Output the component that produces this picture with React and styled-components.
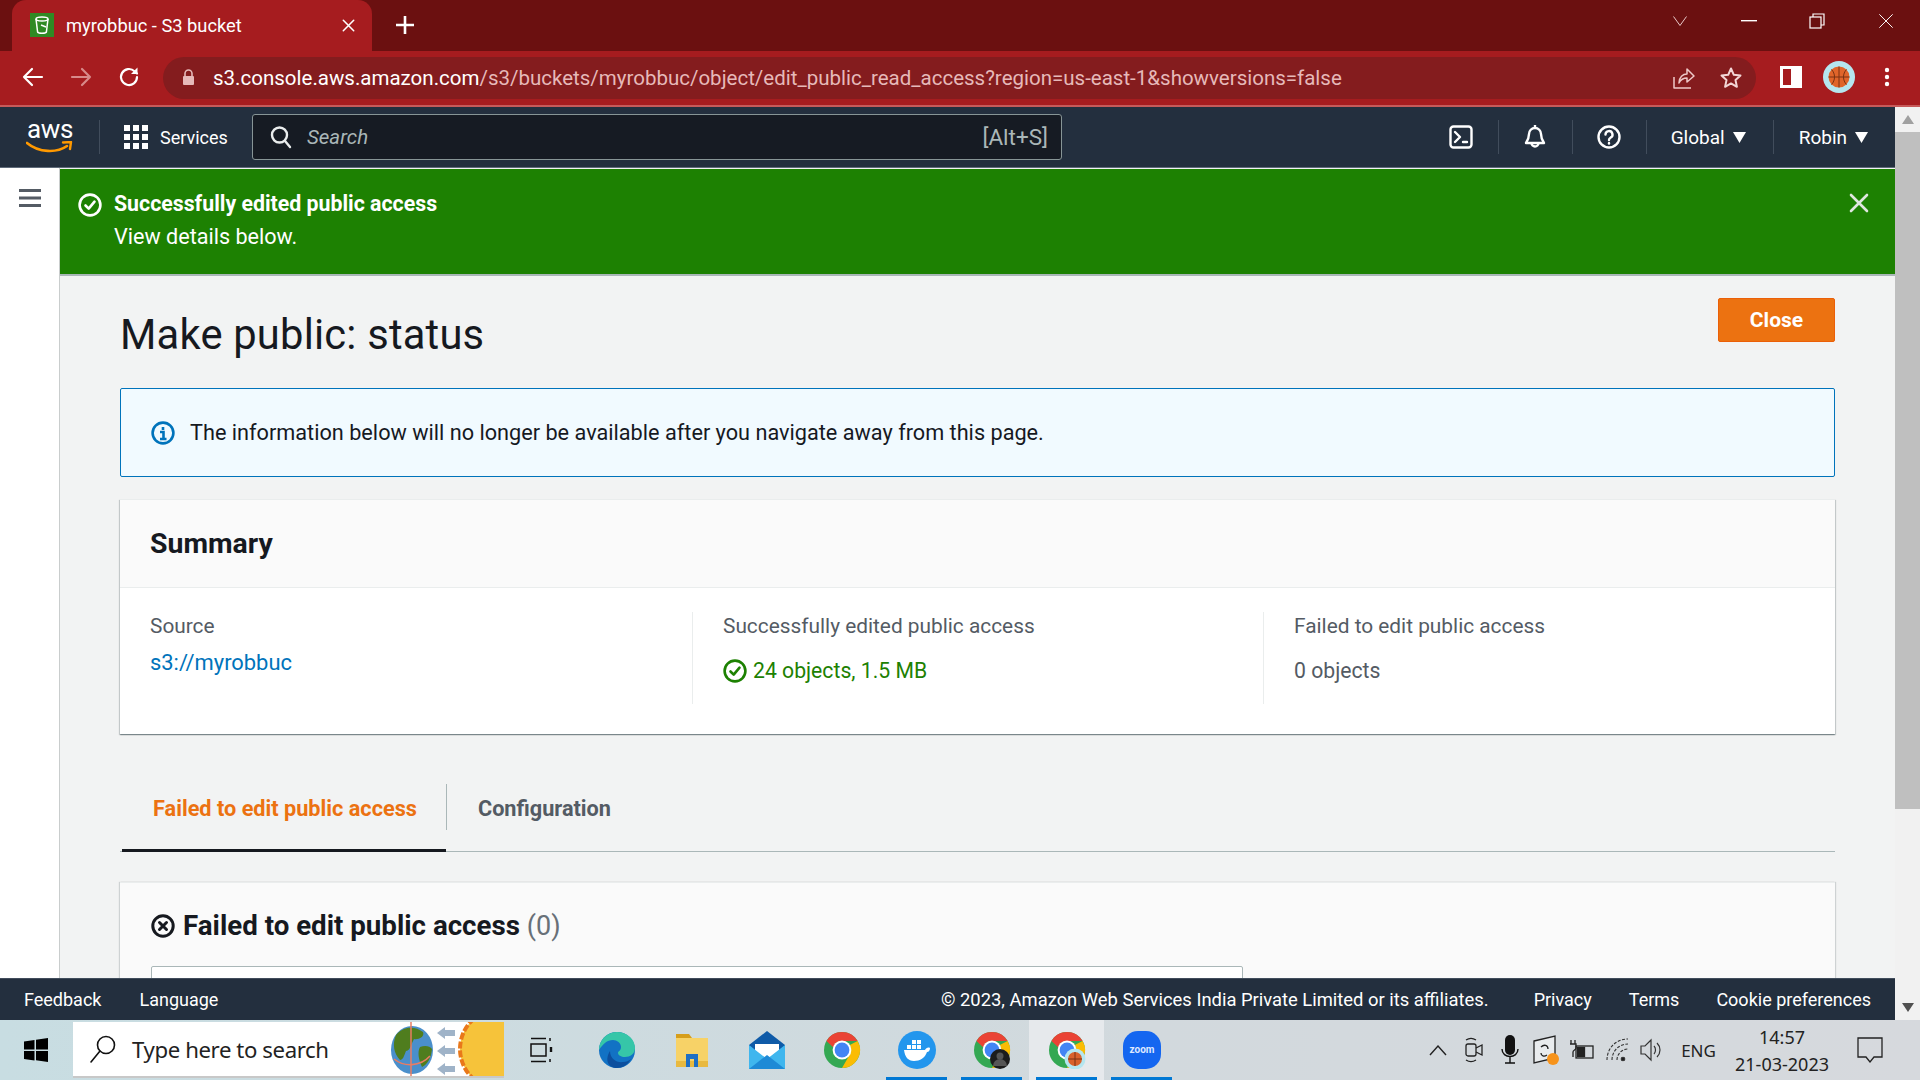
import React from "react";
import styled, { createGlobalStyle } from "styled-components";

const Global = createGlobalStyle`
  html, body { margin: 0; padding: 0; width: 1920px; height: 1080px; overflow: hidden; }
  body { font-family: "Roboto", "Noto Sans", sans-serif; color: #16191f; }
  * { box-sizing: border-box; }
`;

const Screen = styled.div`width:1920px;height:1080px;display:flex;flex-direction:column;overflow:hidden;background:#fff;`;

/* Chrome window */
const TabStrip = styled.div`height:51px;background:#6b1010;display:flex;align-items:flex-end;padding-left:12px;flex:none;`;
const ChromeTab = styled.div`width:360px;height:51px;background:#a61c1f;border-radius:14px 14px 0 0;display:flex;align-items:center;padding-left:18px;gap:12px;color:#fff;font:400 18.3px "Roboto",sans-serif;padding-bottom:1px;`;
const Favicon = styled.div`width:24px;height:24px;background:#2f8a24;display:grid;place-items:center;flex:none;`;
const TabTitle = styled.span`flex:1;white-space:nowrap;`;
const TabClose = styled.span`width:30px;display:flex;justify-content:flex-start;`;
const NewTab = styled.div`width:24px;height:24px;margin:0 0 14px 21px;display:grid;place-items:center;align-self:flex-end;`;
const WinControls = styled.div`margin-left:auto;display:flex;align-self:stretch;align-items:center;`;
const WinSlot = styled.div`width:68.5px;height:100%;display:grid;place-items:center;padding-bottom:9px;`;

const Toolbar = styled.div`height:56px;background:#a61c1f;border-bottom:2px solid #c65a5a;display:flex;align-items:center;flex:none;padding-bottom:2px;`;
const ToolBtn = styled.div`width:48px;height:40px;display:grid;place-items:center;flex:none;`;
const ToolNav = styled.div`display:flex;padding-left:9px;width:163px;flex:none;`;
const Omnibox = styled.div`width:1593px;height:42px;border-radius:21px;background:#841c1e;display:flex;align-items:center;padding:0 0 0 19px;flex:none;margin-top:1px;`;
const UrlText = styled.div`margin-left:18px;font:400 20.5px "Roboto",sans-serif;color:#e6b9b9;white-space:nowrap;flex:1;`;
const UrlHost = styled.span`color:#fff;`;
const OmniIcons = styled.div`display:flex;align-items:center;padding-right:1px;`;
const ToolRight = styled.div`display:flex;padding-left:11px;`;

/* Console */
const ConsoleRow = styled.div`flex:1;min-height:0;display:flex;`;
const ConsoleCol = styled.div`flex:1;min-width:0;display:flex;flex-direction:column;`;
const Scrollbar = styled.div`width:25px;flex:none;background:#f1f1f1;display:flex;flex-direction:column;align-items:center;`;
const ScrollBtn = styled.div`height:25px;width:100%;display:grid;place-items:center;flex:none;`;
const ScrollThumb = styled.div`width:100%;height:677px;background:#bfbfbf;flex:none;`;
const ScrollSpace = styled.div`flex:1;`;

const Nav = styled.div`height:61px;background:#232f3e;display:flex;align-items:center;flex:none;border-bottom:1px solid #5f6b7a;font-family:"Roboto",sans-serif;color:#fff;`;
const LogoCell = styled.div`width:100px;height:34px;border-right:1px solid #414d5c;padding-left:27px;flex:none;`;
const LogoWord = styled.span`display:block;font:400 26px/24px "Roboto",sans-serif;letter-spacing:-.3px;height:24px;margin-top:-3px;`;
const LogoSmile = styled.svg`display:block;margin-left:-1px;`;
const Services = styled.div`display:flex;align-items:center;gap:12px;width:152px;padding-left:24px;font-size:18px;flex:none;`;
const SearchBox = styled.div`width:810px;height:46px;border:1px solid #879596;border-radius:3px;background:#161b23;display:flex;align-items:center;padding:0 13px 0 17px;color:#aab7b8;font-size:22.5px;flex:none;`;
const SearchHint = styled.em`margin-left:15px;flex:1;font-style:italic;font-size:20.5px;`;
const NavRight = styled.div`margin-left:auto;display:flex;align-items:center;height:34px;padding-right:27px;`;
const NavIcon = styled.div`width:74px;height:34px;display:grid;place-items:center;border-right:1px solid #414d5c;flex:none;`;
const NavMenu = styled.div`display:flex;align-items:center;gap:8px;height:34px;font-size:19px;padding:0 ${p => p.$pr}px 0 ${p => p.$pl}px;border-right:${p => (p.$divider ? "1px solid #414d5c" : "none")};`;

const Body = styled.div`flex:1;min-height:0;display:flex;`;
const SideNav = styled.div`width:60px;flex:none;background:#fff;border-right:1px solid #c9cdcd;padding:21px 0 0 19px;`;
const Main = styled.div`flex:1;min-width:0;background:#f2f3f3;overflow:hidden;display:flex;flex-direction:column;`;

const Flash = styled.div`margin-top:1px;height:107px;background:#1d8102;color:#fff;display:flex;padding:22px 26px 0 18px;border-bottom:2px solid #aab7b8;flex:none;font-family:"Roboto",sans-serif;`;
const FlashIcon = styled.div`width:36px;height:24px;flex:none;margin-top:2px;`;
const FlashText = styled.div`flex:1;font-size:21.3px;`;
const FlashTitle = styled.div`font-weight:700;line-height:25px;`;
const FlashSub = styled.div`line-height:25px;margin-top:8px;font-size:21.6px;`;
const FlashClose = styled.div`margin-top:2px;height:20px;flex:none;`;

const Content = styled.div`padding:0 60px;flex:none;`;
const HeadRow = styled.div`display:flex;justify-content:space-between;align-items:flex-start;height:112px;padding-top:22px;`;
const Heading = styled.h1`margin:13px 0 0;font:400 41.7px/48px "Roboto",sans-serif;color:#16191f;letter-spacing:.2px;`;
const Primary = styled.button`width:117px;height:44px;background:#ec7211;border:1px solid #eb5f07;border-radius:2px;color:#fff;font:700 21px "Roboto",sans-serif;`;

const Info = styled.div`height:89px;background:#f1faff;border:1px solid #0073bb;border-radius:2px;display:flex;align-items:center;padding-left:30px;gap:15px;font-size:21.7px;margin-bottom:22px;`;

const Card = styled.section`background:#fff;box-shadow:0 1px 1px 0 rgba(0,28,36,.3),1px 1px 1px 0 rgba(0,28,36,.15),-1px 1px 1px 0 rgba(0,28,36,.15);border-top:1px solid #eaeded;`;
const CardHead = styled.div`height:88px;background:#fafafa;border-bottom:1px solid #eaeded;padding-left:30px;display:flex;align-items:center;`;
const CardTitle = styled.h2`margin:0;font:700 28.4px "Roboto",sans-serif;`;
const Cols = styled.div`display:grid;grid-template-columns:573px 571px 1fr;padding:24px 0 30px;height:146px;`;
const Col = styled.div`padding-left:30px;border-right:${p => (p.$last ? "none" : "1px solid #eaeded")};height:92px;`;
const Label = styled.div`font-size:20.85px;color:#545b64;line-height:28px;`;
const Link = styled.div`font-size:21.9px;color:#0073bb;line-height:28px;margin-top:9px;`;
const Value = styled.div`font-size:21.2px;line-height:28px;margin-top:${p => p.$mt}px;color:${p => p.$color};display:flex;align-items:center;gap:6px;`;

const Tabs = styled.div`margin-top:50px;height:68px;border-bottom:1px solid #aab7b8;display:flex;padding-left:2px;`;
const TabBtn = styled.div`height:68px;font:700 21.7px "Roboto",sans-serif;line-height:49px;color:${p => (p.$active ? "#ec7211" : "#545b64")};border-bottom:${p => (p.$active ? "3px solid #16191f" : "none")};padding:0 29px 0 31px;`;
const TabDivider = styled.div`width:1px;height:46px;background:#aab7b8;flex:none;`;

const Card2 = styled.section`margin-top:30px;background:#fafafa;box-shadow:-1px 0 1px 0 rgba(0,28,36,.15),1px 0 1px 0 rgba(0,28,36,.15);border-top:1px solid #eaeded;padding:0 30px 0 31px;height:200px;`;
const Card2Title = styled.h2`margin:0;padding-top:26px;font:700 27.7px/34px "Roboto",sans-serif;display:flex;align-items:center;gap:8px;`;
const Count = styled.span`font-weight:400;font-size:27px;color:#687078;`;
const Table = styled.div`margin-top:23px;width:1092px;height:60px;background:#fff;border:1px solid #aab7b8;border-radius:2px 2px 0 0;`;

const Footer = styled.div`height:42px;background:#232f3e;border-top:1px solid #414d5c;color:#fff;display:flex;align-items:center;padding:0 24px;font:400 18px "Roboto",sans-serif;flex:none;`;
const FootLeft = styled.div`display:flex;gap:38px;`;
const FootRight = styled.div`margin-left:auto;display:flex;gap:37px;`;
const Copy = styled.span`margin-right:8px;font-size:18.4px;`;

/* Windows taskbar */
const Taskbar = styled.div`height:60px;background:linear-gradient(90deg,#c8dde2 0%,#d2d9dd 60%,#d6d9dd 100%);display:flex;align-items:center;flex:none;`;
const StartBtn = styled.div`width:73px;height:60px;display:grid;place-items:center;flex:none;padding-right:2px;`;
const TaskSearch = styled.div`width:431px;height:56px;background:#fff;display:flex;align-items:center;padding-left:16px;flex:none;font:400 22.2px "Noto Sans",sans-serif;color:#222;overflow:hidden;border-bottom:2px solid #c8c8c8;`;
const TaskSearchText = styled.span`margin-left:15px;flex:1;white-space:nowrap;letter-spacing:-.4px;`;
const WeatherArt = styled.svg`flex:none;`;
const TaskApp = styled.div`width:75px;height:60px;display:grid;place-items:center;flex:none;position:relative;background:${p => (p.$active ? "#e6e9ec" : "transparent")};&::after{content:"";display:${p => (p.$on ? "block" : "none")};position:absolute;left:7px;right:7px;bottom:0;height:3px;background:#0078d4;}`;
const Tray = styled.div`margin-left:auto;display:flex;align-items:center;height:60px;padding-right:20px;`;
const TraySlot = styled.div`width:${p => p.$w}px;display:grid;place-items:center;flex:none;`;
const Lang = styled.div`width:65px;text-align:center;font:400 17px "Noto Sans",sans-serif;color:#222;`;
const Clock = styled.div`width:109px;padding:1px 7px 0 0;text-align:center;font:400 18px/27px "Noto Sans",sans-serif;color:#222;white-space:nowrap;`;
const Notify = styled.div`width:60px;display:grid;place-items:center;flex:none;`;

const s = { fill: "none", stroke: "#fff", strokeWidth: 2.2, strokeLinecap: "round", strokeLinejoin: "round" };

const Check = ({ c = "#fff", size = 24 }) => (
  <svg width={size} height={size} viewBox="0 0 24 24" fill="none" stroke={c} strokeWidth="2.6" strokeLinecap="round" strokeLinejoin="round">
    <circle cx="12" cy="12" r="10.4" /><path d="M7.5 12.5l3.2 3.2 5.8-7" />
  </svg>
);
const Cross = ({ size = 20, c = "#fff", w = 2.4 }) => (
  <svg width={size} height={size} viewBox="0 0 20 20" stroke={c} strokeWidth={w} strokeLinecap="round"><path d="M2 2l16 16M18 2L2 18" /></svg>
);

const Chrome = ({ badge }) => (
  <svg width="38" height="38" viewBox="0 0 38 38">
    <circle cx="19" cy="19" r="18" fill="#34a853" />
    <path d="M19 1a18 18 0 0 1 15.6 9H19a9 9 0 0 0-8.6 6.4L3.4 10A18 18 0 0 1 19 1z" fill="#ea4335" />
    <path d="M34.6 10A18 18 0 0 1 19 37l7.8-13.5A9 9 0 0 0 26.8 14z" fill="#fbbc04" />
    <circle cx="19" cy="19" r="9.4" fill="#fff" /><circle cx="19" cy="19" r="7.4" fill="#4285f4" />
    {badge === "dark" && <><circle cx="27" cy="28" r="10" fill="#1c1c1c" /><circle cx="27" cy="25" r="3.5" fill="#555" /><path d="M20 35a7 7 0 0 1 14 0z" fill="#555" /></>}
    {badge === "ball" && <><circle cx="27" cy="28" r="10.5" fill="#b5e6ef" /><circle cx="27" cy="28" r="7" fill="#d9612a" /><path d="M27 21v14M20 28h14" stroke="#7a3312" strokeWidth="1" /></>}
  </svg>
);

export default function App() {
  return (
    <Screen>
      <Global />
      <TabStrip>
        <ChromeTab>
          <Favicon>
            <svg width="18" height="20" viewBox="0 0 18 20" fill="none" stroke="#fff" strokeWidth="1.5"><ellipse cx="9" cy="4" rx="6" ry="2" /><path d="M3 4l1.6 13c.3 1.6 8.5 1.6 8.8 0L15 4" /><path d="M8 10l5 2" /></svg>
          </Favicon>
          <TabTitle>myrobbuc - S3 bucket</TabTitle>
          <TabClose><Cross size={13} /></TabClose>
        </ChromeTab>
        <NewTab><svg width="20" height="20" viewBox="0 0 20 20" stroke="#fff" strokeWidth="2.6"><path d="M10 1v18M1 10h18" /></svg></NewTab>
        <WinControls>
          <WinSlot><svg width="16" height="12" viewBox="0 0 16 12" fill="none" stroke="#e8c8c8" strokeWidth="1"><path d="M1.5 1.5L8 10.5l6.5-9" /></svg></WinSlot>
          <WinSlot><svg width="16" height="2" viewBox="0 0 16 2"><rect width="16" height="1.4" fill="#fff" /></svg></WinSlot>
          <WinSlot><svg width="16" height="16" viewBox="0 0 16 16" fill="none" stroke="#fff" strokeWidth="1.2"><rect x="1" y="4" width="11" height="11" /><path d="M4 4V1h11v11h-3" /></svg></WinSlot>
          <WinSlot><Cross size={16} w={1.2} /></WinSlot>
        </WinControls>
      </TabStrip>

      <Toolbar>
        <ToolNav>
          <ToolBtn><svg width="22" height="22" viewBox="0 0 22 22" {...s}><path d="M20 11H2M10 3l-8 8 8 8" /></svg></ToolBtn>
          <ToolBtn><svg width="22" height="22" viewBox="0 0 22 22" {...s} stroke="#d88a8a"><path d="M2 11h18M12 3l8 8-8 8" /></svg></ToolBtn>
          <ToolBtn><svg width="24" height="24" viewBox="0 0 24 24" {...s}><path d="M20 12a8 8 0 1 1-2.5-5.8L20 8.5" /><path d="M20.5 2.5v6.500H14z" fill="#fff" stroke="none" /></svg></ToolBtn>
        </ToolNav>
        <Omnibox>
          <svg width="13" height="17" viewBox="0 0 13 17"><path d="M3 7V4.500a3.500 3.500 0 0 1 7 0V7" fill="none" stroke="#e6b9b9" strokeWidth="1.6" /><rect x="1" y="7" width="11" height="9" rx="1" fill="#e6b9b9" /></svg>
          <UrlText><UrlHost>s3.console.aws.amazon.com</UrlHost>/s3/buckets/myrobbuc/object/edit_public_read_access?region=us-east-1&showversions=false</UrlText>
          <OmniIcons>
            <ToolBtn><svg width="24" height="24" viewBox="0 0 24 24" fill="none" stroke="#eec9c9" strokeWidth="1.5" strokeLinejoin="round"><path d="M3 11v11h17" /><path d="M8 17c0-6 4-9 8-9V3l7 7-7 6v-4c-3 0-6 1-8 5z" /></svg></ToolBtn>
            <ToolBtn><svg width="24" height="24" viewBox="0 0 24 24" fill="none" stroke="#f3d6d6" strokeWidth="2" strokeLinejoin="round"><path d="M12 2.500l2.800 6.300 6.700.7-5 4.600 1.400 6.700L12 17.400l-5.900 3.400 1.400-6.700-5-4.600 6.700-.7z" /></svg></ToolBtn>
          </OmniIcons>
        </Omnibox>
        <ToolRight>
          <ToolBtn><svg width="22" height="22" viewBox="0 0 22 22"><rect width="22" height="22" fill="#fff" /><rect x="3" y="3" width="8" height="16" fill="#a61c1f" /></svg></ToolBtn>
          <ToolBtn>
            <svg width="32" height="32" viewBox="0 0 32 32"><circle cx="16" cy="16" r="16" fill="#b5e6ef" /><circle cx="16" cy="16" r="10.5" fill="#e0652a" /><path d="M16 5.500v21M5.500 16h21M8.500 8.500c4 4 4 11 0 15M23.500 8.500c-4 4-4 11 0 15" fill="none" stroke="#7a3312" strokeWidth="1" /></svg>
          </ToolBtn>
          <ToolBtn><svg width="6" height="20" viewBox="0 0 6 20" fill="#fff"><circle cx="3" cy="3" r="2.2" /><circle cx="3" cy="10" r="2.2" /><circle cx="3" cy="17" r="2.2" /></svg></ToolBtn>
        </ToolRight>
      </Toolbar>

      <ConsoleRow>
        <ConsoleCol>
          <Nav>
            <LogoCell>
              <LogoWord>aws</LogoWord>
              <LogoSmile width="48" height="13" viewBox="0 0 48 13" fill="none"><path d="M1 2c12 10 30 10 40 3" stroke="#ff9900" strokeWidth="2.6" strokeLinecap="round" /><path d="M37 1.500l8-.5-1 7" stroke="#ff9900" strokeWidth="2.4" strokeLinecap="round" strokeLinejoin="round" /></LogoSmile>
            </LogoCell>
            <Services>
              <svg width="24" height="24" viewBox="0 0 24 24" fill="#fff">
                {[0, 9, 18].flatMap(x => [0, 9, 18].map(y => <rect key={`${x}-${y}`} x={x} y={y} width="6" height="6" />))}
              </svg>
              Services
            </Services>
            <SearchBox>
              <svg width="22" height="24" viewBox="0 0 22 24" fill="none" stroke="#eaeded" strokeWidth="2.4" strokeLinecap="round"><circle cx="9.5" cy="10" r="7.5" /><path d="M15 16l5 6" /></svg>
              <SearchHint>Search</SearchHint>
              [Alt+S]
            </SearchBox>
            <NavRight>
              <NavIcon>
                <svg width="24" height="24" viewBox="0 0 24 24" fill="none" stroke="#fff" strokeWidth="2.4" strokeLinecap="round" strokeLinejoin="round"><rect x="1.5" y="1.5" width="21" height="21" rx="3" /><path d="M6 7l5 5-5 5M14 17h4" /></svg>
              </NavIcon>
              <NavIcon>
                <svg width="24" height="26" viewBox="0 0 24 26" fill="none" stroke="#fff" strokeWidth="2.4" strokeLinejoin="round"><path d="M12 1v3M3 19c2-3 3-5 3-9a6 6 0 0 1 12 0c0 4 1 6 3 9z" /><path d="M8.5 19a3.500 3.500 0 0 0 7 0" /></svg>
              </NavIcon>
              <NavIcon>
                <svg width="24" height="24" viewBox="0 0 24 24" fill="none" stroke="#fff" strokeWidth="2.4" strokeLinecap="round"><circle cx="12" cy="12" r="10.5" /><path d="M8.5 9.500a3.500 3.500 0 1 1 5 3.200c-1 .6-1.500 1.200-1.500 2.300" /><path d="M12 18v.5" /></svg>
              </NavIcon>
              <NavMenu $pl={24} $pr={27} $divider>
                Global
                <svg width="13" height="11" viewBox="0 0 13 11" fill="#fff"><path d="M0 0h13L6.500 11z" /></svg>
              </NavMenu>
              <NavMenu $pl={25} $pr={0}>
                Robin
                <svg width="13" height="11" viewBox="0 0 13 11" fill="#fff"><path d="M0 0h13L6.500 11z" /></svg>
              </NavMenu>
            </NavRight>
          </Nav>
          <Body>
            <SideNav>
              <svg width="22" height="18" viewBox="0 0 22 18" fill="#545b64"><rect width="22" height="3" /><rect y="7.5" width="22" height="3" /><rect y="15" width="22" height="3" /></svg>
            </SideNav>
            <Main>
              <Flash>
                <FlashIcon><Check /></FlashIcon>
                <FlashText>
                  <FlashTitle>Successfully edited public access</FlashTitle>
                  <FlashSub>View details below.</FlashSub>
                </FlashText>
                <FlashClose><Cross size={20} c="#dfe6df" w={2.6} /></FlashClose>
              </Flash>
              <Content>
                <HeadRow>
                  <Heading>Make public: status</Heading>
                  <Primary>Close</Primary>
                </HeadRow>
                <Info>
                  <svg width="24" height="24" viewBox="0 0 24 24" fill="none" stroke="#0073bb" strokeWidth="2.6"><circle cx="12" cy="12" r="10.4" /><path d="M9 11h3.500v7M9 18h6.500M12 6v3" /></svg>
                  The information below will no longer be available after you navigate away from this page.
                </Info>
                <Card>
                  <CardHead><CardTitle>Summary</CardTitle></CardHead>
                  <Cols>
                    <Col>
                      <Label>Source</Label>
                      <Link>s3://myrobbuc</Link>
                    </Col>
                    <Col>
                      <Label>Successfully edited public access</Label>
                      <Value $mt={17} $color="#1d8102"><Check c="#1d8102" size={24} />24 objects, 1.5 MB</Value>
                    </Col>
                    <Col $last>
                      <Label>Failed to edit public access</Label>
                      <Value $mt={17} $color="#545b64">0 objects</Value>
                    </Col>
                  </Cols>
                </Card>
                <Tabs>
                  <TabBtn $active>Failed to edit public access</TabBtn>
                  <TabDivider />
                  <TabBtn>Configuration</TabBtn>
                </Tabs>
                <Card2>
                  <Card2Title>
                    <svg width="24" height="24" viewBox="0 0 24 24" fill="none" stroke="#16191f" strokeWidth="3" strokeLinecap="round"><circle cx="12" cy="12" r="10.2" /><path d="M8.500 8.500l7 7M15.500 8.500l-7 7" /></svg>
                    <span>Failed to edit public access <Count>(0)</Count></span>
                  </Card2Title>
                  <Table />
                </Card2>
              </Content>
            </Main>
          </Body>
          <Footer>
            <FootLeft><span>Feedback</span><span>Language</span></FootLeft>
            <FootRight>
              <Copy>© 2023, Amazon Web Services India Private Limited or its affiliates.</Copy>
              <span>Privacy</span><span>Terms</span><span>Cookie preferences</span>
            </FootRight>
          </Footer>
        </ConsoleCol>
        <Scrollbar>
          <ScrollBtn><svg width="12" height="9" viewBox="0 0 12 9" fill="#a0a0a0"><path d="M6 0l6 9H0z" /></svg></ScrollBtn>
          <ScrollThumb />
          <ScrollSpace />
          <ScrollBtn><svg width="12" height="9" viewBox="0 0 12 9" fill="#505050"><path d="M0 0h12L6 9z" /></svg></ScrollBtn>
        </Scrollbar>
      </ConsoleRow>

      <Taskbar>
        <StartBtn>
          <svg width="24" height="24" viewBox="0 0 24 24" fill="#000"><path d="M0 3.500L10.500 2v9.500H0zM12 1.800L24 0v11.500H12zM0 13h10.500v9.500L0 21zM12 13h12v11l-12-1.800z" /></svg>
        </StartBtn>
        <TaskSearch>
          <svg width="28" height="30" viewBox="0 0 28 30" fill="none" stroke="#111" strokeWidth="1.6" strokeLinecap="round"><circle cx="17" cy="11" r="8.5" /><path d="M11 17L2 28" /></svg>
          <TaskSearchText>Type here to search</TaskSearchText>
          <WeatherArt width="114" height="56" viewBox="0 0 114 56">
            <ellipse cx="22" cy="29" rx="21" ry="24" fill="#4a8fcb" />
            <path d="M6 14c6-8 18-10 27-3 2 5-5 8-9 7-3 5-3 11-8 12-2 5-3 9-6 9-6-6-8-16-4-25zM30 26c5-2 10-1 12 2-1 9-4 15-10 18-3-6-5-15-2-20z" fill="#4f7d1e" />
            <path d="M4 38c10 8 26 8 36-3" fill="none" stroke="#e97c63" strokeWidth="1.6" />
            <path d="M21 0v56" stroke="#e97c63" strokeWidth="1.5" />
            <path d="M47 12l8-6v3h10v6H55v3zM47 30l8-6v3h10v6H55v3zM47 48l8-6v3h10v6H55v3z" fill="#9fb3c8" />
            <circle cx="110" cy="28" r="40" fill="#f6c33a" stroke="#e9781a" strokeWidth="4" strokeDasharray="7 2" />
          </WeatherArt>
        </TaskSearch>
        <TaskApp>
          <svg width="26" height="26" viewBox="0 0 26 26" fill="none" stroke="#111" strokeWidth="1.5"><path d="M2 1.500h15M2 24.500h15M21 1v3M21 22v3" /><rect x="2" y="7" width="15" height="12" /><path d="M22 10v5" strokeWidth="2.4" /></svg>
        </TaskApp>
        <TaskApp>
          <svg width="38" height="38" viewBox="0 0 38 38"><circle cx="19" cy="19" r="18" fill="#1272c4" /><path d="M1 19C1 9 9 1 19 1c10 0 18 7 18 16 0 6-5 9-10 9-4 0-7-2-7-4 0-2 3-2 3-6 0-4-4-7-8-7C9 9 5 13 1 19z" fill="#36c6a8" /><path d="M12 20c0 8 7 12 13 11 3 0 6-1 8-3-3 6-9 9-14 9-8 0-13-7-7-17z" fill="#0c4f9e" /></svg>
        </TaskApp>
        <TaskApp>
          <svg width="34" height="36" viewBox="0 0 34 36"><path d="M1 2h13l3 4H1z" fill="#d69e1b" /><rect x="1" y="6" width="32" height="29" fill="#f7d267" /><rect x="1" y="29" width="32" height="6" fill="#e9b93f" /><path d="M11 35V22h12v13h-4v-8h-4v8z" fill="#1f6fc4" /></svg>
        </TaskApp>
        <TaskApp>
          <svg width="38" height="38" viewBox="0 0 38 38"><path d="M1 14L19 0l18 14v24H1z" fill="#0f5ba8" /><path d="M7 13h24v11L19 32 7 24z" fill="#fff" /><path d="M1 14v24h36V14L19 28z" fill="#3fb6ee" /><path d="M1 38l18-14 18 14z" fill="#1e8ad6" /></svg>
        </TaskApp>
        <TaskApp><Chrome /></TaskApp>
        <TaskApp $on>
          <svg width="38" height="38" viewBox="0 0 38 38"><circle cx="19" cy="19" r="19" fill="#2396ed" /><path d="M6 19h21c1-2 3-3 5-2 0 2-1 4-3 4-2 6-7 9-13 9-6 0-9-4-10-11z" fill="#fff" /><g fill="#fff"><rect x="9" y="14" width="4" height="4" /><rect x="14" y="14" width="4" height="4" /><rect x="19" y="14" width="4" height="4" /><rect x="14" y="9" width="4" height="4" /><rect x="19" y="9" width="4" height="4" /></g></svg>
        </TaskApp>
        <TaskApp $on><Chrome badge="dark" /></TaskApp>
        <TaskApp $on $active><Chrome badge="ball" /></TaskApp>
        <TaskApp $on>
          <svg width="38" height="38" viewBox="0 0 38 38"><rect width="38" height="38" rx="15" fill="#1466f0" /><text x="19" y="22" fontFamily="Roboto,sans-serif" fontSize="10" fontWeight="700" fill="#dfe9ff" textAnchor="middle">zoom</text></svg>
        </TaskApp>
        <Tray>
          <TraySlot $w={36}><svg width="18" height="11" viewBox="0 0 18 11" fill="none" stroke="#222" strokeWidth="1.4"><path d="M1 10l8-9 8 9" /></svg></TraySlot>
          <TraySlot $w={36}><svg width="20" height="26" viewBox="0 0 20 26" fill="none" stroke="#222" strokeWidth="1.3"><rect x="2" y="7" width="10" height="12" rx="2" /><path d="M12 11l6-3v10l-6-3M2 3c3-2 7-2 10 0M2 23c3 2 7 2 10 0" /></svg></TraySlot>
          <TraySlot $w={36}><svg width="18" height="30" viewBox="0 0 18 30"><rect x="4" y="0" width="10" height="20" rx="5" fill="#111" /><path d="M1 14c0 10 16 10 16 0M9 22v6M4 28h10" fill="none" stroke="#111" strokeWidth="1.4" /></svg></TraySlot>
          <TraySlot $w={36}><svg width="26" height="32" viewBox="0 0 26 32"><path d="M1 7l21-5v22l-21 5z" fill="#e9ecee" stroke="#222" strokeWidth="1.3" /><path d="M8 13c3-3 7-2 7 2M14 21c-3 2-6 1-6-2" fill="none" stroke="#222" strokeWidth="1.3" /><circle cx="20" cy="25" r="6" fill="#f7931a" /></svg></TraySlot>
          <TraySlot $w={36}><svg width="26" height="24" viewBox="0 0 26 24" fill="none" stroke="#222" strokeWidth="1.3"><rect x="7" y="8" width="17" height="12" /><rect x="8.5" y="9.5" width="7" height="9" fill="#222" /><path d="M2 2v4M6 2v4M1 6h6v4c0 2-3 2-3 4v5" /></svg></TraySlot>
          <TraySlot $w={36}><svg width="26" height="26" viewBox="0 0 26 26" fill="none" stroke="#333" strokeWidth="1.1"><path d="M2 23C2 11 11 2 23 2M7 23c0-9 7-16 16-16M12 23c0-6 5-11 11-11" strokeDasharray="3 1.5" /><circle cx="18" cy="22" r="1.8" fill="#222" /></svg></TraySlot>
          <TraySlot $w={30}><svg width="22" height="24" viewBox="0 0 22 24" fill="none" stroke="#333" strokeWidth="1.2"><path d="M1 8h4l6-6v20l-6-6H1zM14 8c2 2 2 6 0 8M17 5c4 4 4 10 0 14" /></svg></TraySlot>
          <Lang>ENG</Lang>
          <Clock>14:57<br />21-03-2023</Clock>
          <Notify>
            <svg width="26" height="26" viewBox="0 0 26 26" fill="none" stroke="#222" strokeWidth="1.3"><path d="M1 1h24v19h-8l-4 5-4-5H1z" /></svg>
          </Notify>
        </Tray>
      </Taskbar>
    </Screen>
  );
}
